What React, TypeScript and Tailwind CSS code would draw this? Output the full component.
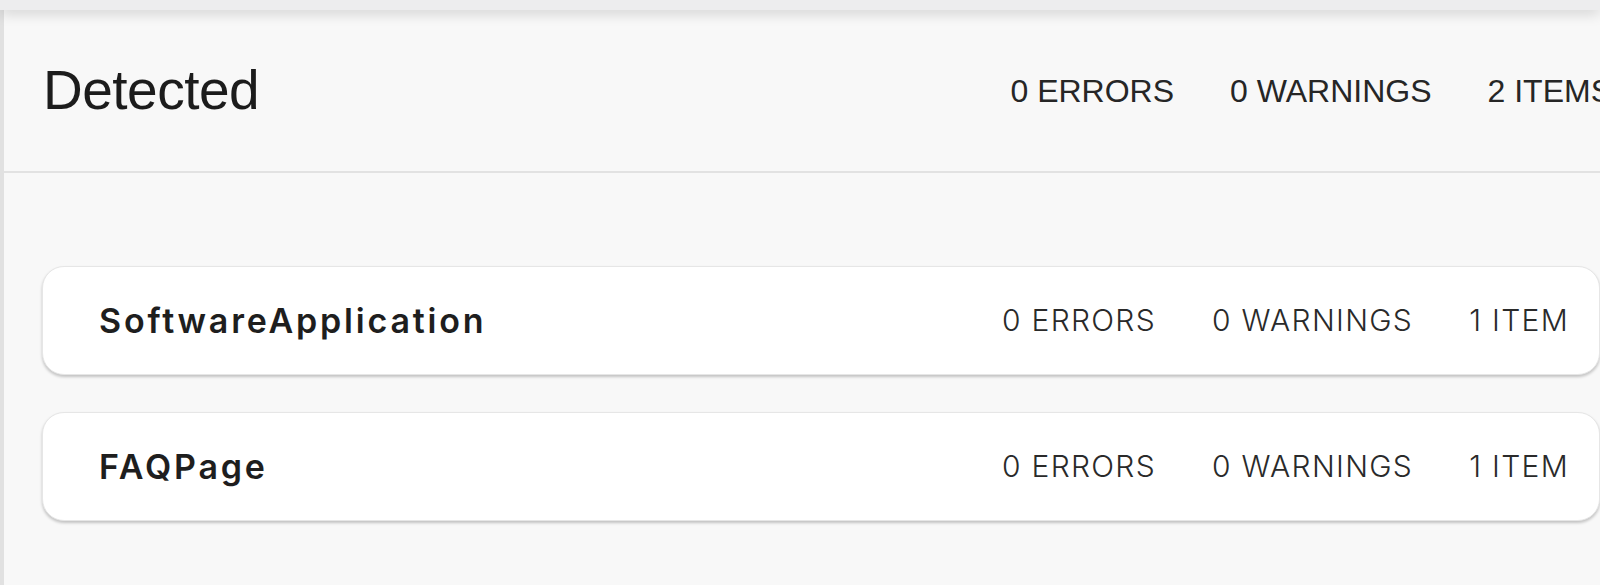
import React from "react";

const cardFont = { fontFamily: "Inter, 'Noto Sans', sans-serif" };

function Card({ title }: { title: string }) {
  return (
    <div className="flex h-[109px] items-center rounded-[22px] border border-[#e6e6e6] bg-white pl-[56px] pr-[30px] shadow-[0_2px_3px_rgba(0,0,0,0.22)]">
      <div className="text-[34px] font-semibold tracking-[2.8px] text-[#1e1e1e]" style={cardFont}>
        {title}
      </div>
      <div className="ml-auto flex items-center gap-[56px] text-[30px] font-light tracking-[1.3px] text-[#2a2a2a]" style={cardFont}>
        <span>0 ERRORS</span>
        <span>0 WARNINGS</span>
        <span>1 ITEM</span>
      </div>
    </div>
  );
}

export default function App() {
  return (
    <div className="h-[585px] w-[1600px] overflow-hidden bg-[#f8f8f8]" style={{ fontFamily: "'Liberation Sans', Arial, sans-serif" }}>
      <div className="relative z-10 h-[10px] bg-[#ededee] shadow-[0_3px_14px_rgba(0,0,0,0.18)]" />
      <div className="flex h-[575px]">
        <div className="w-[4px] shrink-0 bg-[#e1e1e1]" />
        <div className="flex-1">
          <div className="flex h-[163px] items-center border-b-[2px] border-[#e2e2e2] pl-[39px]">
            <div className="text-[55px] leading-none tracking-[-0.5px] text-[#1c1c1c]">Detected</div>
            <div className="-mr-[12px] ml-auto flex shrink-0 items-center gap-[56px] whitespace-nowrap text-[32px] text-[#262626]">
              <span>0 ERRORS</span>
              <span>0 WARNINGS</span>
              <span>2 ITEMS</span>
            </div>
          </div>
          <div className="flex flex-col gap-[37px] pl-[38px] pt-[93px]">
            <Card title="SoftwareApplication" />
            <Card title="FAQPage" />
          </div>
        </div>
      </div>
    </div>
  );
}
